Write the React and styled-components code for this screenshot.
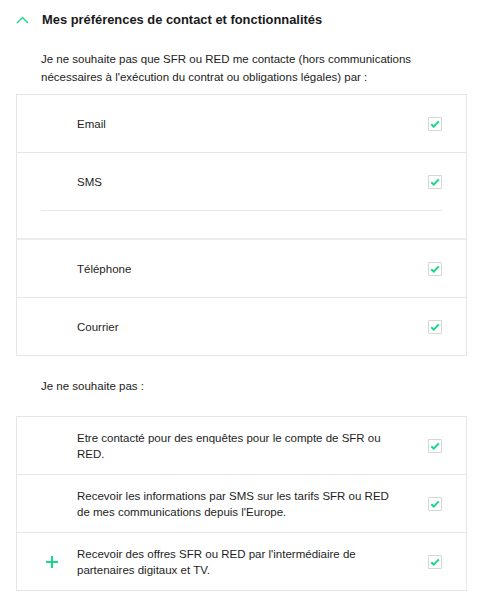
import React from 'react';
import styled, { createGlobalStyle } from 'styled-components';

const GlobalStyle = createGlobalStyle`
  body {
    margin: 0;
    background: #ffffff;
    font-family: 'Liberation Sans', Arial, sans-serif;
    color: #222222;
  }
`;

const Container = styled.div`
  display: flex;
  flex-direction: column;
  padding: 11px 11px 0 16px;
`;

const Header = styled.div`
  display: flex;
  flex-direction: row;
  align-items: center;
  gap: 13px;
  height: 18px;
`;

const Chevron = styled.svg`
  width: 13px;
  height: 8px;
  flex-shrink: 0;
`;

const Title = styled.h2`
  margin: 0;
  font-size: 12.9px;
  line-height: 18px;
  font-weight: bold;
  color: #1a1a1a;
`;

const Intro = styled.p`
  margin: ${(props) => props.$margin};
  padding-left: 25px;
  font-size: 11.5px;
  line-height: 18px;
  color: #222222;
`;

const Box = styled.div`
  display: flex;
  flex-direction: column;
  border: 1px solid #e6e6e6;
`;

const Row = styled.div`
  display: flex;
  flex-direction: column;
  border-bottom: ${(props) => props.$border || '1px solid #e6e6e6'};

  &:last-child {
    border-bottom: none;
  }
`;

const RowInner = styled.div`
  position: relative;
  display: flex;
  flex-direction: row;
  align-items: center;
  justify-content: space-between;
  padding: ${(props) => (props.$tall ? '13px 24px 12px 60px' : '21px 24px 20px 60px')};
`;

const Label = styled.span`
  font-size: 11.5px;
  line-height: 16px;
  color: #1e1e1e;
  max-width: 320px;
`;

const SubDivider = styled.div`
  height: 1px;
  margin: 0 24px;
  background: #e6e6e6;
`;

const Spacer = styled.div`
  height: 27px;
`;

const CheckBox = styled.span`
  display: flex;
  align-items: center;
  justify-content: center;
  width: 12px;
  height: 12px;
  border: 1px solid #d6d6d6;
  border-radius: 1px;
  flex-shrink: 0;
  background: #ffffff;
`;

const PlusIcon = styled.svg`
  position: absolute;
  left: 29px;
  top: 50%;
  margin-top: -6px;
  width: 12px;
  height: 12px;
`;

const GREEN = '#19d88c';

function Check() {
  return (
    <CheckBox>
      <svg width="10" height="8" viewBox="0 0 10 8">
        <path d="M1.2 4.2 L3.8 6.6 L8.8 1.4" fill="none" stroke={GREEN} strokeWidth="2" />
      </svg>
    </CheckBox>
  );
}

function Option({ label, tall, plus, border }) {
  return (
    <Row $border={border}>
      <RowInner $tall={tall}>
        {plus && (
          <PlusIcon viewBox="0 0 12 12">
            <path d="M6 0 V12 M0 6 H12" stroke={GREEN} strokeWidth="2" />
          </PlusIcon>
        )}
        <Label>{label}</Label>
        <Check />
      </RowInner>
    </Row>
  );
}

function App() {
  return (
    <>
      <GlobalStyle />
      <Container>
        <Header>
          <Chevron viewBox="0 0 13 8">
            <path d="M1 7 L6.5 1.5 L12 7" fill="none" stroke={GREEN} strokeWidth="1.4" />
          </Chevron>
          <Title>Mes préférences de contact et fonctionnalités</Title>
        </Header>
        <Intro $margin="21px 0 8px 0">
          Je ne souhaite pas que SFR ou RED me contacte (hors communications nécessaires à
          l'exécution du contrat ou obligations légales) par :
        </Intro>
        <Box>
          <Option label="Email" />
          <Row $border="2px solid #ececec">
            <RowInner>
              <Label>SMS</Label>
              <Check />
            </RowInner>
            <SubDivider />
            <Spacer />
          </Row>
          <Option label="Téléphone" />
          <Option label="Courrier" />
        </Box>
        <Intro $margin="21px 0 21px 0">Je ne souhaite pas :</Intro>
        <Box>
          <Option tall label="Etre contacté pour des enquêtes pour le compte de SFR ou RED." />
          <Option
            tall
            label="Recevoir les informations par SMS sur les tarifs SFR ou RED de mes communications depuis l'Europe."
          />
          <Option
            tall
            plus
            label="Recevoir des offres SFR ou RED par l'intermédiaire de partenaires digitaux et TV."
          />
        </Box>
      </Container>
    </>
  );
}

export default App;
